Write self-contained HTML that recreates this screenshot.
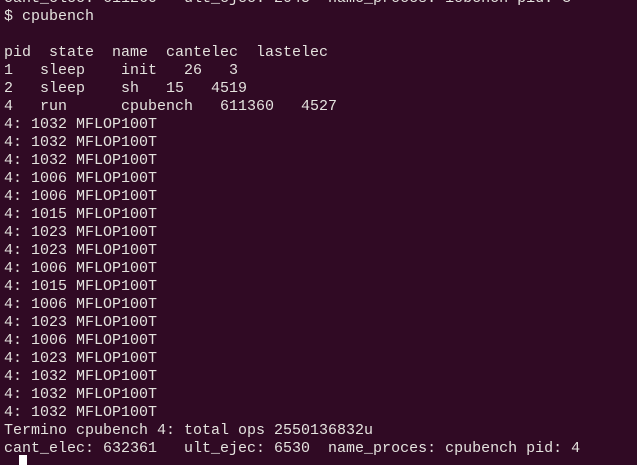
<!DOCTYPE html>
<html><head><meta charset="utf-8"><style>
html,body{margin:0;padding:0;background:#300a24;width:637px;height:458px;overflow:hidden}
pre{position:absolute;left:4px;top:-10px;margin:0;font-family:"Liberation Mono","DejaVu Sans Mono",monospace;font-size:15px;line-height:18px;color:#e4e2de;letter-spacing:0}
.cur{position:absolute;left:19px;top:455px;width:8px;height:10px;background:#fff}
</style></head><body>
<pre>cant_elec: 611260   ult_ejec: 2045  name_proces: iobench pid: 3
$ cpubench

pid  state  name  cantelec  lastelec
1   sleep    init   26   3
2   sleep    sh   15   4519
4   run      cpubench   611360   4527
4: 1032 MFLOP100T
4: 1032 MFLOP100T
4: 1032 MFLOP100T
4: 1006 MFLOP100T
4: 1006 MFLOP100T
4: 1015 MFLOP100T
4: 1023 MFLOP100T
4: 1023 MFLOP100T
4: 1006 MFLOP100T
4: 1015 MFLOP100T
4: 1006 MFLOP100T
4: 1023 MFLOP100T
4: 1006 MFLOP100T
4: 1023 MFLOP100T
4: 1032 MFLOP100T
4: 1032 MFLOP100T
4: 1032 MFLOP100T
Termino cpubench 4: total ops 2550136832u
cant_elec: 632361   ult_ejec: 6530  name_proces: cpubench pid: 4</pre>
<div class="cur"></div>
</body></html>
